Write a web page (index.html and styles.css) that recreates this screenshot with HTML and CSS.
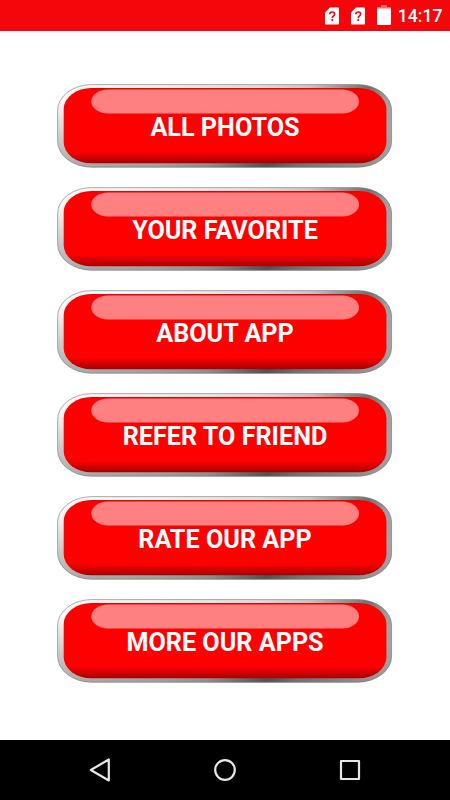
FILE: index.html
```html
<!DOCTYPE html>
<html lang="en">
<head>
<meta charset="utf-8">
<title>Photos</title>
<link rel="stylesheet" href="styles.css">
</head>
<body>
<svg class="defs" width="0" height="0" aria-hidden="true">
  <defs>
    <linearGradient id="metal" gradientUnits="userSpaceOnUse" x1="0" y1="0" x2="158" y2="206">
      <stop offset="0" stop-color="#fafafa"/>
      <stop offset=".25" stop-color="#f0f0f0"/>
      <stop offset=".48" stop-color="#dedede"/>
      <stop offset=".6" stop-color="#c6c6c6"/>
      <stop offset=".74" stop-color="#707070"/>
      <stop offset=".81" stop-color="#9b9b9b"/>
      <stop offset=".9" stop-color="#b4b4b4"/>
      <stop offset="1" stop-color="#d2d2d2"/>
    </linearGradient>
    <linearGradient id="shade" x1="0" y1="0" x2="0" y2="1">
      <stop offset=".2" stop-color="#000" stop-opacity="0"/>
      <stop offset="1" stop-color="#000" stop-opacity=".29"/>
    </linearGradient>
    <linearGradient id="face" x1="0" y1="0" x2="0" y2="1">
      <stop offset="0" stop-color="#e00000"/>
      <stop offset=".03" stop-color="#f00"/>
      <stop offset=".84" stop-color="#f00"/>
      <stop offset="1" stop-color="#a80000"/>
    </linearGradient>
    <symbol id="plate" viewBox="0 0 336 84">
      <rect x=".4" y=".4" width="334.4" height="83" rx="34" ry="26" fill="url(#metal)"/>
      <rect x=".6" y=".6" width="334" height="82.6" rx="34" ry="26" fill="url(#shade)" stroke="#777" stroke-width=".6"/>
      <rect x="6.7" y="4" width="322.7" height="75.3" rx="28" ry="21" fill="url(#face)"/>
      <rect x="34.3" y="5.5" width="267.7" height="24" rx="17" ry="12" fill="#ff8080"/>
    </symbol>
  </defs>
</svg>
<header class="status">
  <svg class="sim" viewBox="0 0 14 18"><path d="M5 .5h8a1 1 0 0 1 1 1v15a1 1 0 0 1-1 1H1a1 1 0 0 1-1-1v-11z" fill="#fff"/><path d="M4.8 7.2c0-3 4.9-2.9 4.9-.1 0 1.8-2.4 1.7-2.4 3.8M7.3 12v2" fill="none" stroke="#f4060b" stroke-width="1.7"/></svg>
  <svg class="sim" viewBox="0 0 14 18"><path d="M5 .5h8a1 1 0 0 1 1 1v15a1 1 0 0 1-1 1H1a1 1 0 0 1-1-1v-11z" fill="#fff"/><path d="M4.8 7.2c0-3 4.9-2.9 4.9-.1 0 1.8-2.4 1.7-2.4 3.8M7.3 12v2" fill="none" stroke="#f4060b" stroke-width="1.7"/></svg>
  <svg class="battery" viewBox="0 0 14 20"><path d="M4 0h6v2h4v2H0V2h4z" fill="#f9686b"/><path d="M0 3.5h14V19a1 1 0 0 1-1 1H1a1 1 0 0 1-1-1z" fill="#fff"/></svg>
  <time class="clock">14:17</time>
</header>
<main class="menu">
  <button class="item"><svg class="plate"><use href="#plate"/></svg><span class="label">ALL PHOTOS</span></button>
  <button class="item"><svg class="plate"><use href="#plate"/></svg><span class="label">YOUR FAVORITE</span></button>
  <button class="item"><svg class="plate"><use href="#plate"/></svg><span class="label">ABOUT APP</span></button>
  <button class="item"><svg class="plate"><use href="#plate"/></svg><span class="label">REFER TO FRIEND</span></button>
  <button class="item"><svg class="plate"><use href="#plate"/></svg><span class="label">RATE OUR APP</span></button>
  <button class="item"><svg class="plate"><use href="#plate"/></svg><span class="label">MORE OUR APPS</span></button>
</main>
<nav class="navbar">
  <svg viewBox="0 0 24 24"><path d="M20.8 1.5v21L2.8 12z"/></svg>
  <svg viewBox="0 0 24 24"><circle cx="12" cy="12" r="9.8"/></svg>
  <svg viewBox="0 0 24 24"><rect x="3" y="3" width="18" height="18"/></svg>
</nav>
</body>
</html>
```

FILE: styles.css
```css
* { box-sizing: border-box; }
body {
  margin: 0;
  width: 450px;
  height: 800px;
  display: flex;
  flex-direction: column;
  background: #fff;
  font-family: Roboto, "Liberation Sans", sans-serif;
  overflow: hidden;
}
.defs { position: absolute; }
.status {
  height: 31px;
  flex: none;
  display: flex;
  align-items: flex-start;
  justify-content: flex-end;
  padding: 5px 7.5px 0 0;
  background: #f4060b;
  color: #fff;
}
.sim { width: 14px; height: 18px; margin: 2px 12.3px 0 0; }
.sim + .sim { margin-right: 11.5px; }
.battery { width: 14px; height: 20px; margin-right: 7px; }
.clock { font-size: 17.6px; line-height: 23px; font-weight: 500; }
.menu {
  flex: 1;
  display: flex;
  flex-direction: column;
  align-items: center;
  gap: 19px;
  padding-top: 53px;
}
.item {
  display: grid;
  width: 336px;
  height: 84px;
  padding: 0;
  border: 0;
  background: none;
  font: inherit;
  color: #fff;
}
.plate, .label { grid-area: 1 / 1; }
.plate { width: 336px; height: 84px; }
.label {
  align-self: center;
  font-size: 25.2px;
  line-height: 30px;
  font-weight: 700;
  padding-top: 4px;
}
.navbar {
  height: 60px;
  flex: none;
  display: flex;
  align-items: center;
  justify-content: space-between;
  padding: 0 88px;
  background: #000;
}
.navbar svg {
  width: 24px;
  height: 24px;
  overflow: visible;
  fill: none;
  stroke: #e6e6e6;
  stroke-width: 2.2;
  stroke-linejoin: round;
}
```
